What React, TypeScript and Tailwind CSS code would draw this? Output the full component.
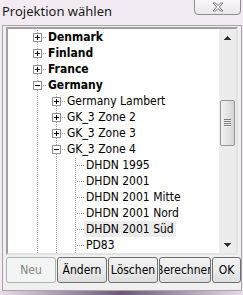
import React from "react";

type Row = { level: 1 | 2 | 3; label: string; bold?: boolean; box?: "+" | "-"; hl?: boolean };

const rows: Row[] = [
  { level: 1, label: "Denmark", bold: true, box: "+" },
  { level: 1, label: "Finland", bold: true, box: "+" },
  { level: 1, label: "France", bold: true, box: "+" },
  { level: 1, label: "Germany", bold: true, box: "-" },
  { level: 2, label: "Germany Lambert", box: "+" },
  { level: 2, label: "GK_3 Zone 2", box: "+" },
  { level: 2, label: "GK_3 Zone 3", box: "+" },
  { level: 2, label: "GK_3 Zone 4", box: "-" },
  { level: 3, label: "DHDN 1995" },
  { level: 3, label: "DHDN 2001" },
  { level: 3, label: "DHDN 2001 Mitte" },
  { level: 3, label: "DHDN 2001 Nord" },
  { level: 3, label: "DHDN 2001 Süd", hl: true },
  { level: 3, label: "PD83" },
];

const centers = [29, 48, 67];

function Guides({ row }: { row: Row }) {
  const w = centers[row.level - 1] + 11;
  const cx = centers[row.level - 1];
  const dots: React.ReactNode[] = [];
  for (let l = 0; l < row.level; l++) {
    const x = centers[l];
    for (let y = 0; y < 16; y += 2) {
      dots.push(<rect key={`v${l}-${y}`} x={x} y={y + 1} width={1} height={1} fill="#a0a0a0" />);
    }
  }
  for (let x = cx + 2; x < w - 1; x += 2) {
    dots.push(<rect key={`h${x}`} x={x} y={8} width={1} height={1} fill="#a0a0a0" />);
  }
  return (
    <svg width={w} height={16} className="shrink-0" shapeRendering="crispEdges">
      {dots}
      {row.box && (
        <g>
          <rect x={cx - 4 + 0.5} y={4 + 0.5} width={8} height={8} fill="#ffffff" stroke="#919191" />
          <rect x={cx - 2} y={8} width={5} height={1} fill="#000" />
          {row.box === "+" && <rect x={cx} y={6} width={1} height={5} fill="#000" />}
        </g>
      )}
    </svg>
  );
}

function TreeRow({ row }: { row: Row }) {
  return (
    <div className="flex h-[16px] items-center">
      <Guides row={row} />
      <span
        className={`h-[16px] leading-[16px] whitespace-nowrap ${row.bold ? "font-bold" : ""} ${
          row.hl ? "bg-[#ececec] -ml-[2px] px-[2px]" : ""
        }`}
      >
        {row.label}
      </span>
    </div>
  );
}

function Scrollbar() {
  return (
    <div className="w-[17px] h-full bg-[#ececec] flex flex-col">
      <div className="h-[17px] flex items-center justify-center">
        <svg width="7" height="4" shapeRendering="crispEdges">
          <polygon points="3.5,0 7,4 0,4" fill="#333" />
        </svg>
      </div>
      <div className="h-[54px]" />
      <div className="h-[46px] mx-[1px] rounded-[2px] border border-[#979797] bg-linear-to-r from-[#f1f1f1] via-[#e4e4e4] to-[#d6d6d6] flex items-center justify-center">
        <svg width="7" height="8" shapeRendering="crispEdges">
          <rect x="0" y="0" width="7" height="1" fill="#7a7a7a" />
          <rect x="0" y="2" width="7" height="1" fill="#7a7a7a" />
          <rect x="0" y="4" width="7" height="1" fill="#7a7a7a" />
          <rect x="0" y="6" width="7" height="1" fill="#7a7a7a" />
          <rect x="0" y="1" width="7" height="1" fill="#f4f4f4" />
          <rect x="0" y="3" width="7" height="1" fill="#f4f4f4" />
          <rect x="0" y="5" width="7" height="1" fill="#f4f4f4" />
          <rect x="0" y="7" width="7" height="1" fill="#f4f4f4" />
        </svg>
      </div>
      <div className="flex-1" />
      <div className="h-[17px] flex items-center justify-center">
        <svg width="7" height="4" shapeRendering="crispEdges">
          <polygon points="0,0 7,0 3.5,4" fill="#333" />
        </svg>
      </div>
    </div>
  );
}

function Btn({ label, w, disabled }: { label: string; w: string; disabled?: boolean }) {
  return (
    <div
      className={`${w} h-[26px] rounded-[3px] border flex items-center justify-center overflow-hidden whitespace-nowrap ${
        disabled
          ? "border-[#adb2b5] bg-[#f4f4f4] text-[#838383]"
          : "border-[#707070] bg-linear-to-b from-[#f2f2f2] via-[#ebebeb] to-[#dddddd] text-black"
      }`}
    >
      {label}
    </div>
  );
}

export default function App() {
  return (
    <div
      className="w-[243px] h-[295px] bg-[#f3ebf3] relative overflow-hidden flex flex-col"
      style={{ fontFamily: '"DejaVu Sans Condensed", "DejaVu Sans", sans-serif', fontSize: 12 }}
    >
      <div className="h-[25px] relative">
        <div
          className="pl-[2px] pt-[3px] text-[13px] leading-[17px] text-[#1a1a1a]"
          style={{ fontFamily: '"Noto Sans", "Open Sans", sans-serif' }}
        >
          Projektion wählen
        </div>
        <div className="absolute top-[-2px] left-[194px] w-[47px] h-[17px] rounded-b-[4px] border border-[#8d8d8d] bg-linear-to-b from-[#fbf8fb] to-[#ece6ec] flex items-center justify-center">
          <svg width="12" height="10" viewBox="0 0 12 10">
            <path
              d="M1 1 L3.5 1 L6 3.6 L8.5 1 L11 1 L7.3 5 L11 9 L8.5 9 L6 6.4 L3.5 9 L1 9 L4.7 5 Z"
              fill="#ffffff"
              stroke="#6d6d6d"
              strokeWidth="0.9"
              strokeLinejoin="round"
            />
          </svg>
        </div>
      </div>
      <div className="ml-[2px] mr-[1px] h-[266px] border border-[#a8a4aa] bg-[#f0f0f0] flex flex-col">
        <div className="ml-[3px] mr-[3px] mt-[1px] h-[228px] border-2 border-t-[#a0a0a0] border-l-[#a0a0a0] border-r-[#e3e3e3] border-b-[#e3e3e3] bg-white flex overflow-hidden">
          <div className="flex-1 overflow-hidden">
            {rows.map((r, i) => (
              <TreeRow key={i} row={r} />
            ))}
          </div>
          <Scrollbar />
        </div>
        <div className="flex mt-[2px] ml-[3px] gap-[1px]">
          <Btn label="Neu" w="w-[50px]" disabled />
          <Btn label="Ändern" w="w-[50px]" />
          <Btn label="Löschen" w="w-[50px]" />
          <Btn label="Berechnen" w="w-[52px]" />
          <Btn label="OK" w="w-[29px]" />
        </div>
      </div>
      <div className="flex-1 bg-linear-to-r from-[#e8dce8] via-[#6e5a78] to-[#e8dce8]" />
    </div>
  );
}
